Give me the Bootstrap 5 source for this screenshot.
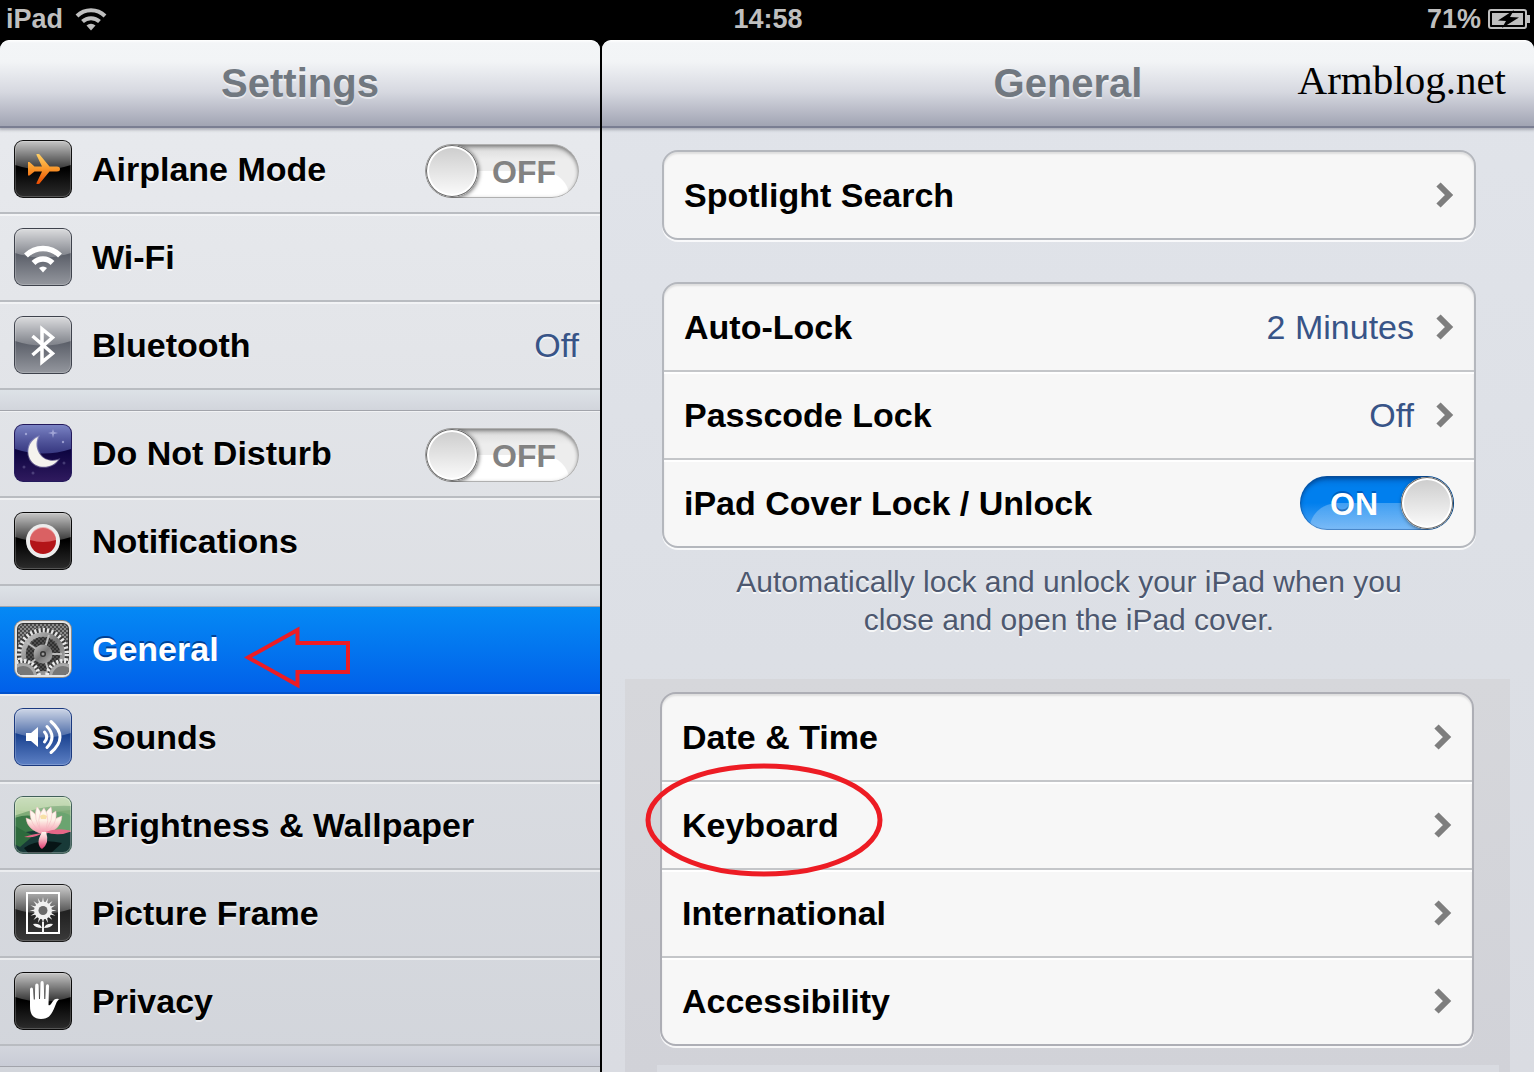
<!DOCTYPE html>
<html lang="en">
<head>
<meta charset="utf-8">
<meta name="viewport" content="width=device-width, initial-scale=1">
<title>Settings</title>
<link href="https://cdn.jsdelivr.net/npm/bootstrap@5.3.0/dist/css/bootstrap.min.css" rel="stylesheet">
<style>
  body { background: #000; color: #000; font-family: "Liberation Sans", Arial, sans-serif; font-size: 34px; line-height: 40px; }
  .status-bar { height: 40px; color: #bfbfbf; font-size: 27px; line-height: 38px; font-weight: 700; padding: 0 4px 2px 6px; }
  .status-side { flex: 1; gap: 7px; }
  .status-side:first-child { gap: 12px; }
  .side-pane { width: 600px; background: linear-gradient(#e9ebef, #e3e5e9 30%, #d2d5db); border-radius: 9px 9px 0 0; }
  .main-pane { background: linear-gradient(#e1e4ea, #dcdfe5 60%, #dadce2); border-radius: 9px 9px 0 0; min-width: 0; }
  .split { gap: 2px; }
  .pane-head { height: 86px; flex: none; border-radius: 9px 9px 0 0; z-index: 1;
    background: linear-gradient(#fff 0, #f3f5f7 3px, #f2f4f6 22px, #d6d8e0 52px, #a1a4b3 86px);
    box-shadow: 0 2px #7a7e92, 0 3px 3px 1px rgba(60, 64, 80, .35); }
  .pane-head h1, .pane-head h2 { margin: 0; font-size: 40px; line-height: 46px; font-weight: 700; color: #717880; text-shadow: 0 2px rgba(255, 255, 255, .55); }
  .site-mark { top: 0; bottom: 6px; right: 28px; font: 41px/46px "Liberation Serif", "Times New Roman", serif; }

  .list-group-item { color: #000; font-weight: 700; border-radius: 0; }
  .value { font-weight: 400; color: #385487; }
  .side-pane .list-group-item { height: 88px; padding: 0 21px 0 14px; gap: 20px; background: transparent; border: 0;
    border-bottom: 2px solid #b9bcc1; box-shadow: inset 0 2px rgba(255, 255, 255, .5); text-shadow: 0 2px rgba(255, 255, 255, .6); }
  .side-pane .list-group-flush > .list-group-item:last-child { border-bottom-width: 2px; }
  .side-pane .list-group-item.active { color: #fff; margin: 0; z-index: 0; background: linear-gradient(#058af5, #0160e9); border-color: #0152cd;
    box-shadow: inset 0 1px #0a68b4; text-shadow: 0 -2px rgba(0, 40, 110, .7); }
  .band { height: 20px; flex: none; background: linear-gradient(#dde2e7, #d2d5dc); box-shadow: 0 1px #a2a4ab; z-index: 1; }
  .band-last { background: linear-gradient(#d3d6dd, #c9ccd6); }
  .app-icon { width: 58px; height: 58px; flex: none; }

  .group-area { padding: 24px 58px 0 60px; }
  .option-card { border: 2px solid #b4b7bd; border-radius: 16px; background: #f7f7f7; box-shadow: 0 2px rgba(255, 255, 255, .8), inset 0 2px 2px rgba(0, 0, 0, .1); overflow: visible; }
  .option-card + .option-card { margin-top: 42px; }
  .option-card .list-group-item { height: 88px; padding: 0 20px; gap: 22px; background: transparent; border: 0; border-bottom: 2px solid #c4c6c9; box-shadow: inset 0 2px #fff; }
  .option-card .list-group-item:first-child { box-shadow: none; }
  .option-card .list-group-item:last-child { height: 86px; border-bottom: 0; }
  .chevron { width: 18px; height: 26px; flex: none; }
  .group-note { margin: 15px 0 40px; font-size: 30px; line-height: 38px; color: #4d586f; text-shadow: 0 2px rgba(255, 255, 255, .75); }
  .shaded { margin: 0 24px 0 23px; padding-top: 13px; background: linear-gradient(#d6d7db, #d1d2d8); }
  .shaded .option-card { margin: 0 36px 19px 35px; border-color: #adaeb5; }
  .next-strip { margin: 0 11px 0 32px; background: #d9dbe1; }

  .toggle { appearance: none; -webkit-appearance: none; width: 154px; height: 54px; margin: 0; flex: none; position: relative; border-radius: 27px; overflow: hidden;
    font-family: inherit; font-size: 32px; line-height: 54px; font-weight: 700; cursor: pointer;
    background: radial-gradient(circle at 0 100%, #fff 26px, transparent 27px) 118px 27px / 27px 27px no-repeat, linear-gradient(#fff, #fff) 27px 27px / 91px 27px no-repeat, linear-gradient(#d8d8d8, #ededed 16px);
    box-shadow: inset 0 0 0 1px #b0b0b0, inset 0 3px 4px rgba(0, 0, 0, .4), inset 0 0 4px rgba(0, 0, 0, .2); text-shadow: none; color: #828282; }
  .side-pane .toggle { margin-top: 4px; }
  .toggle::before { content: "OFF"; position: absolute; left: 67px; top: 1px; }
  .toggle::after { content: ""; position: absolute; left: 1px; top: 1px; width: 52px; height: 52px; border-radius: 50%; background: linear-gradient(#cbcbcb, #fcfcfc);
    box-shadow: inset 0 0 0 1px #6a6a6a, inset 0 0 0 3px #fff, 1px 1px 4px rgba(0, 0, 0, .6); }
  .toggle:checked { color: #fff;
    background: radial-gradient(circle at 100% 100%, rgba(255, 255, 255, .25) 26px, transparent 27px) 9px 27px / 27px 27px no-repeat, linear-gradient(rgba(255, 255, 255, .25), rgba(255, 255, 255, .25)) 36px 27px / 91px 27px no-repeat, linear-gradient(#0072dc, #007fee 12px 27px, #4fa4f4);
    box-shadow: inset 0 0 0 1px rgba(20, 80, 150, .45), inset 0 3px 4px rgba(0, 30, 80, .5); }
  .toggle:checked::before { content: "ON"; left: 30px; text-shadow: 0 -2px rgba(0, 60, 140, .5); }
  .toggle:checked::after { left: auto; right: 1px; }

  .hint-arrow { left: 244px; top: 20px; width: 108px; height: 64px; }
  .hint-ring { left: -17px; top: -20px; width: 238px; height: 116px; z-index: 2; }
</style>
<script src="https://cdn.jsdelivr.net/npm/bootstrap@5.3.0/dist/js/bootstrap.bundle.min.js"></script>
</head>
<body class="vh-100 overflow-hidden d-flex flex-column">

<svg width="0" height="0" class="position-absolute" aria-hidden="true">
  <defs>
    <linearGradient id="black" x2="0" y2="1"><stop offset="0.5" stop-color="#000"/><stop offset="1" stop-color="#2c2c2c"/></linearGradient>
    <linearGradient id="coal" x2="0" y2="1"><stop offset="0.5" stop-color="#222"/><stop offset="1" stop-color="#3a3a3a"/></linearGradient>
    <linearGradient id="steel" x2="0" y2="1"><stop offset="0.45" stop-color="#5b5f69"/><stop offset="1" stop-color="#94979e"/></linearGradient>
    <linearGradient id="night" x2="0" y2="1"><stop offset="0.45" stop-color="#0c0440"/><stop offset="1" stop-color="#2f1a5e"/></linearGradient>
    <linearGradient id="azure" x2="0" y2="1"><stop offset="0.45" stop-color="#19418f"/><stop offset="1" stop-color="#5d80c4"/></linearGradient>
    <linearGradient id="shine" x2="0" y2="1"><stop offset="0" stop-color="#fff" stop-opacity=".78"/><stop offset="1" stop-color="#fff" stop-opacity=".2"/></linearGradient>
    <linearGradient id="dusk" x2="0" y2="1"><stop offset="0" stop-color="#8f9bdc" stop-opacity=".85"/><stop offset="1" stop-color="#5a62b4" stop-opacity=".55"/></linearGradient>
    <linearGradient id="plane" x2="0" y2="1"><stop offset="0" stop-color="#ffd166"/><stop offset=".5" stop-color="#f9962a"/><stop offset="1" stop-color="#ea4a00"/></linearGradient>
    <linearGradient id="metal" x2="1" y2="1"><stop offset="0" stop-color="#c9c9c9"/><stop offset=".5" stop-color="#777"/><stop offset="1" stop-color="#b5b5b5"/></linearGradient>
    <linearGradient id="petal" x2="0" y2="1"><stop offset="0" stop-color="#fffaf0"/><stop offset=".4" stop-color="#f9b8c4"/><stop offset="1" stop-color="#dc3a6e"/></linearGradient>
    <linearGradient id="bloom" gradientUnits="userSpaceOnUse" x1="0" y1="11" x2="0" y2="38"><stop offset="0" stop-color="#fffdf4"/><stop offset=".5" stop-color="#fdf0e6"/><stop offset="1" stop-color="#f48fa8"/></linearGradient>
    <pattern id="mesh" width="4" height="4" patternUnits="userSpaceOnUse"><rect width="4" height="4" fill="#8a8a8a"/><circle cx="1" cy="1" r=".9" fill="#2c2c2c"/><circle cx="3" cy="3" r=".9" fill="#2c2c2c"/></pattern>
    <clipPath id="tile"><rect x="1" y="1" width="56" height="56" rx="8"/></clipPath>
    <clipPath id="well"><rect x="3" y="3" width="52" height="52" rx="5"/></clipPath>
    <g id="gloss"><path d="M1 9a8 8 0 0 1 8-8h40a8 8 0 0 1 8 8v16q-28 9-56 0z" fill="url(#shine)"/><rect x="1.500" y="1.500" width="55" height="55" rx="7.500" fill="none" stroke="#fff" stroke-opacity=".2"/></g>
    <symbol id="chev" viewBox="0 0 18 26"><path d="M2.500 2.500 13 13 2.500 23.500" fill="none" stroke="#7e7e7e" stroke-width="6"/></symbol>
  </defs>
</svg>

<header class="status-bar d-flex justify-content-between align-items-center flex-shrink-0">
  <div class="status-side d-flex align-items-center">iPad
    <svg width="32" height="24" viewBox="0 0 32 24" fill="none" stroke="#bfbfbf" stroke-width="4"><path d="M2 9A20 20 0 0 1 30 9M7.500 14.500a12.500 12.500 0 0 1 17 0"/><path d="M16 23.500l-4.500-5a7 7 0 0 1 9 0z" fill="#bfbfbf" stroke="none"/></svg>
  </div>
  <div>14:58</div>
  <div class="status-side d-flex align-items-center justify-content-end">71%
    <svg width="42" height="20" viewBox="0 0 42 20"><rect x="1" y="1" width="37" height="18" rx="2" fill="none" stroke="#bfbfbf" stroke-width="2"/><path d="M39 6h3v8h-3" fill="#bfbfbf"/><path d="M4 4h31v12H4z" fill="#bfbfbf"/><path d="M26 1 10 11.500l8 .5-4 7 17-10.500-9-.500z" fill="#000"/></svg>
  </div>
</header>

<div class="split d-flex flex-grow-1 overflow-hidden">
  <aside class="side-pane d-flex flex-column flex-shrink-0 overflow-hidden">
    <div class="pane-head position-relative d-flex align-items-center justify-content-center"><h1>Settings</h1></div>
    <nav class="d-flex flex-column">
      <div class="list-group list-group-flush flex-shrink-0">
        <div class="list-group-item d-flex align-items-center">
          <svg class="app-icon" viewBox="0 0 58 58"><rect width="58" height="58" rx="9" fill="#111"/><rect x="1" y="1" width="56" height="56" rx="8" fill="url(#black)"/><use href="#gloss"/><path d="M14 22h1.500l5 4.500H28L22.500 15q-.5-1 .5-1h1.500q1 0 1.500 1l9.500 11.500H43q3 0 3 2.500t-3 2.500h-7.500L26 43q-.5 1-1.500 1H23q-1 0-.5-1L28 31.500h-7.500l-5 4H14z" fill="url(#plane)"/></svg>
          <label class="flex-grow-1" for="airplane">Airplane Mode</label>
          <input class="toggle" type="checkbox" role="switch" id="airplane">
        </div>
        <a href="#" class="list-group-item list-group-item-action d-flex align-items-center">
          <svg class="app-icon" viewBox="0 0 58 58"><rect width="58" height="58" rx="9" fill="#3f434d"/><rect x="1" y="1" width="56" height="56" rx="8" fill="url(#steel)"/><use href="#gloss"/><g fill="none" stroke="#fff" stroke-width="5.500"><path d="M12 27.500a24 24 0 0 1 34 0M19.500 35a13.500 13.500 0 0 1 19 0"/></g><path d="M29 44.500l-4-4.500a6 6 0 0 1 8 0z" fill="#fff"/></svg>
          <span>Wi-Fi</span>
        </a>
        <a href="#" class="list-group-item list-group-item-action d-flex align-items-center">
          <svg class="app-icon" viewBox="0 0 58 58"><rect width="58" height="58" rx="9" fill="#3f434d"/><rect x="1" y="1" width="56" height="56" rx="8" fill="url(#steel)"/><use href="#gloss"/><path d="M18.500 20 38.500 37.500 28 46V13l10.500 8.500L18.500 39" fill="none" stroke="#fff" stroke-width="3.500"/></svg>
          <span class="flex-grow-1">Bluetooth</span><span class="value">Off</span>
        </a>
      </div>
      <div class="band position-relative"></div>
      <div class="list-group list-group-flush flex-shrink-0">
        <div class="list-group-item d-flex align-items-center">
          <svg class="app-icon" viewBox="0 0 58 58"><rect width="58" height="58" rx="9" fill="#241a5c"/><rect x="1" y="1" width="56" height="56" rx="8" fill="url(#night)"/><path d="M1 9a8 8 0 0 1 8-8h40a8 8 0 0 1 8 8v16q-28 9-56 0z" fill="url(#dusk)"/><g fill="#c8cbf0" opacity=".6"><circle cx="12" cy="10" r="1.200"/><circle cx="49" cy="18" r="1.200"/><circle cx="50" cy="39" r="1.500" opacity=".4"/><circle cx="10" cy="43" r="1.500" opacity=".4"/><circle cx="19" cy="49" r="1.500" opacity=".4"/><path d="M39 5l1 3 4 1-4 1-1 4-1-4-4-1 4-1z"/></g><path d="M24 13C12 18 11 35 22 41c8 4 18 1 22-5-7 2-14 0-18-5.500S21.500 19 24 13z" fill="#f5f3ee" stroke="#b9b3d8" stroke-opacity=".45" stroke-width="2" paint-order="stroke"/></svg>
          <label class="flex-grow-1" for="dnd">Do Not Disturb</label>
          <input class="toggle" type="checkbox" role="switch" id="dnd">
        </div>
        <a href="#" class="list-group-item list-group-item-action d-flex align-items-center">
          <svg class="app-icon" viewBox="0 0 58 58"><rect width="58" height="58" rx="9" fill="#0a0a0a"/><rect x="1" y="1" width="56" height="56" rx="8" fill="url(#black)"/><use href="#gloss"/><circle cx="29" cy="29" r="17" fill="#ececec"/><circle cx="29" cy="29" r="13" fill="#b31518"/><path d="M16 28a13 13 0 0 1 26 0q-13 4-26 0z" fill="#f08a8c" opacity=".65"/></svg>
          <span>Notifications</span>
        </a>
      </div>
      <div class="band position-relative"></div>
      <div class="list-group list-group-flush flex-shrink-0">
        <a href="#" class="list-group-item list-group-item-action active position-relative d-flex align-items-center" aria-current="page">
          <svg class="app-icon" viewBox="0 0 58 58"><rect width="58" height="58" rx="9" fill="#8a8a8a"/><rect x="1" y="1" width="56" height="56" rx="8" fill="#e4e4e4"/><rect x="3" y="3" width="52" height="52" rx="6" fill="#333"/><rect x="4" y="4" width="50" height="50" rx="5" fill="url(#mesh)"/>
            <g clip-path="url(#well)"><circle cx="29" cy="34" r="24" fill="none" stroke="#3a3a3a" stroke-width="4"/><circle cx="29" cy="34" r="23.500" fill="none" stroke="#e6e6e6" stroke-width="5" stroke-dasharray="2.200 2.020"/><circle cx="29" cy="34" r="19.500" fill="none" stroke="url(#metal)" stroke-width="4.500"/><circle cx="29" cy="34" r="17" fill="#1d1d1d" opacity=".55"/><g stroke="#bcbcbc" stroke-width="2"><path d="M29 34h19M29 34l6-19M29 34 13 22.500M29 34 13 45.500M29 34l6 18"/></g><circle cx="29" cy="34" r="9.500" fill="url(#metal)"/><circle cx="29" cy="34" r="3" fill="#333"/><circle cx="29" cy="34" r="1.500" fill="#999"/>
            <g fill="none" stroke="#ececec" stroke-width="4" stroke-dasharray="2.200 1.800"><circle cx="9" cy="57" r="16" fill="#444"/><circle cx="49" cy="57" r="16" fill="#444"/></g><g fill="#777" stroke="#a8a8a8" stroke-width="3"><circle cx="9" cy="57" r="12.500"/><circle cx="49" cy="57" r="12.500"/></g></g></svg>
          <span>General</span>
          <svg class="hint-arrow position-absolute" viewBox="0 0 108 64" aria-hidden="true"><path d="M4 31.500 53.500 4v13H104v29H53.500v13z" fill="none" stroke="#ed1c24" stroke-width="4"/></svg>
        </a>
        <a href="#" class="list-group-item list-group-item-action d-flex align-items-center">
          <svg class="app-icon" viewBox="0 0 58 58"><rect width="58" height="58" rx="9" fill="#1b3a80"/><rect x="1" y="1" width="56" height="56" rx="8" fill="url(#azure)"/><use href="#gloss"/><path d="M12 25h5l7-6v20l-7-6h-5z" fill="#fff"/><g fill="none" stroke="#fff" stroke-width="3" stroke-linecap="round"><path d="M30.500 24q4.500 5 0 10M33 18.500q10 10.500 0 21M37 13.500q18 15.500 0 31"/></g></svg>
          <span>Sounds</span>
        </a>
        <a href="#" class="list-group-item list-group-item-action d-flex align-items-center">
          <svg class="app-icon" viewBox="0 0 58 58"><rect width="58" height="58" rx="9" fill="#41605a"/><g clip-path="url(#tile)"><path d="M0 0h58v58H0z" fill="#7fac78"/><path d="M0 0h58v10Q30 8 0 20z" fill="#b3cfa0"/><path d="M0 22q18-6 25 2t-6 14L0 44z" fill="#3c7a48"/><path d="M34 17q16-3 24 4v17H38z" fill="#6ba470"/><path d="M0 39q25-8 58-3v22H0z" fill="#183a38"/><path d="M0 29q12 8 20 10L6 51 0 48z" fill="#2d6a3c"/><path d="M10 52q14-10 38-5l-12 11H15z" fill="#071516"/><g fill="url(#bloom)" stroke="#f0b4bc" stroke-width=".5"><path d="M29 38Q13 34 12 22q10 2 17 16zM29 38q1-12 19-18-1 15-19 18z"/><path d="M29 38Q15 29 16 14q10 5 13 24zM29 38q-1-16 13-23 2 16-13 23z"/><path d="M29 38Q18 22 23 11q7 6 6 27zM29 38q-2-20 8-27 4 13-8 27z"/><path d="M29 39q-9-16 1-27 8 11-1 27z"/></g><path d="M28 37q-9 1-18 4 13 1 18-4zM31 36q13-5 27-1-13 6-27 1z" fill="#e66788"/><path d="M28 36q-7 12 0 17 8-6 4-17z" fill="url(#petal)"/><path d="M26 20q3-3 7 0l-1 3h-5z" fill="#f3d37a" opacity=".6"/></g><path d="M1 9a8 8 0 0 1 8-8h40a8 8 0 0 1 8 8v5q-28 4-56 0z" fill="url(#shine)" opacity=".4"/><rect x="1.500" y="1.500" width="55" height="55" rx="7.500" fill="none" stroke="#fff" stroke-opacity=".3"/></svg>
          <span>Brightness &amp; Wallpaper</span>
        </a>
        <a href="#" class="list-group-item list-group-item-action d-flex align-items-center">
          <svg class="app-icon" viewBox="0 0 58 58"><rect width="58" height="58" rx="9" fill="#1a1a1a"/><rect x="1" y="1" width="56" height="56" rx="8" fill="url(#coal)"/><use href="#gloss"/><path d="M13 9h32v40H13z" fill="none" stroke="#fff" stroke-width="2"/><g fill="#f0f0f0"><g id="rays"><path id="ray" d="M29 13 31.500 26.500 29 40l-2.500-13.500z"/><use href="#ray" transform="rotate(22.500 29 26.500)"/><use href="#ray" transform="rotate(45 29 26.500)"/><use href="#ray" transform="rotate(67.500 29 26.500)"/></g><use href="#rays" transform="rotate(90 29 26.500)"/><circle cx="29" cy="26.500" r="9"/></g><circle cx="29" cy="26.500" r="4.500" fill="#6a6a6a"/><path d="M28 38h2v11h-2zM28 44q-7 0-9-4 7-1 9 4zM30 44q7 0 9-4-7-1-9 4z" fill="#f4f4f4"/></svg>
          <span>Picture Frame</span>
        </a>
        <a href="#" class="list-group-item list-group-item-action d-flex align-items-center">
          <svg class="app-icon" viewBox="0 0 58 58"><rect width="58" height="58" rx="9" fill="#0a0a0a"/><rect x="1" y="1" width="56" height="56" rx="8" fill="url(#black)"/><use href="#gloss"/><path d="M16 17.500q0-2 1.500-2t1.500 2l.8 10h1l.4-14q0-2 1.700-2t1.700 2l.4 13.500h1l.5-16q0-2 1.600-2t1.600 2l.6 16h1l.6-13q.2-2 1.700-1.800t1.400 2L34.500 33q1 1 2.500-1l2-3q2-3 6-2-2 2-3.500 6-3 8-6 11-3 3-8.500 3-6 0-9-4-2-3-2-9z" fill="#fff"/></svg>
          <span>Privacy</span>
        </a>
      </div>
      <div class="band band-last position-relative"></div>
    </nav>
  </aside>

  <main class="main-pane flex-grow-1 d-flex flex-column overflow-hidden">
    <div class="pane-head position-relative d-flex align-items-center justify-content-center">
      <h2>General</h2>
      <div class="site-mark position-absolute d-flex align-items-center">Armblog.net</div>
    </div>
    <section class="group-area flex-shrink-0">
      <div class="option-card list-group">
        <a href="#" class="list-group-item list-group-item-action d-flex align-items-center"><span class="flex-grow-1">Spotlight Search</span><svg class="chevron"><use href="#chev"/></svg></a>
      </div>
      <div class="option-card list-group">
        <a href="#" class="list-group-item list-group-item-action d-flex align-items-center"><span class="flex-grow-1">Auto-Lock</span><span class="value">2 Minutes</span><svg class="chevron"><use href="#chev"/></svg></a>
        <a href="#" class="list-group-item list-group-item-action d-flex align-items-center"><span class="flex-grow-1">Passcode Lock</span><span class="value">Off</span><svg class="chevron"><use href="#chev"/></svg></a>
        <div class="list-group-item d-flex align-items-center"><label class="flex-grow-1" for="cover">iPad Cover Lock / Unlock</label><input class="toggle" type="checkbox" role="switch" id="cover" checked></div>
      </div>
      <p class="group-note text-center">Automatically lock and unlock your iPad when you<br>close and open the iPad cover.</p>
    </section>
    <section class="shaded flex-grow-1 d-flex flex-column">
      <div class="option-card list-group flex-shrink-0">
        <a href="#" class="list-group-item list-group-item-action d-flex align-items-center"><span class="flex-grow-1">Date &amp; Time</span><svg class="chevron"><use href="#chev"/></svg></a>
        <a href="#" class="list-group-item list-group-item-action position-relative d-flex align-items-center"><span class="flex-grow-1">Keyboard</span><svg class="chevron"><use href="#chev"/></svg>
          <svg class="hint-ring position-absolute" viewBox="0 0 238 116" aria-hidden="true"><ellipse cx="119" cy="58" rx="116" ry="54" fill="none" stroke="#ed1c24" stroke-width="5"/></svg></a>
        <a href="#" class="list-group-item list-group-item-action d-flex align-items-center"><span class="flex-grow-1">International</span><svg class="chevron"><use href="#chev"/></svg></a>
        <a href="#" class="list-group-item list-group-item-action d-flex align-items-center"><span class="flex-grow-1">Accessibility</span><svg class="chevron"><use href="#chev"/></svg></a>
      </div>
      <div class="next-strip flex-grow-1"></div>
    </section>
  </main>
</div>
</body>
</html>
